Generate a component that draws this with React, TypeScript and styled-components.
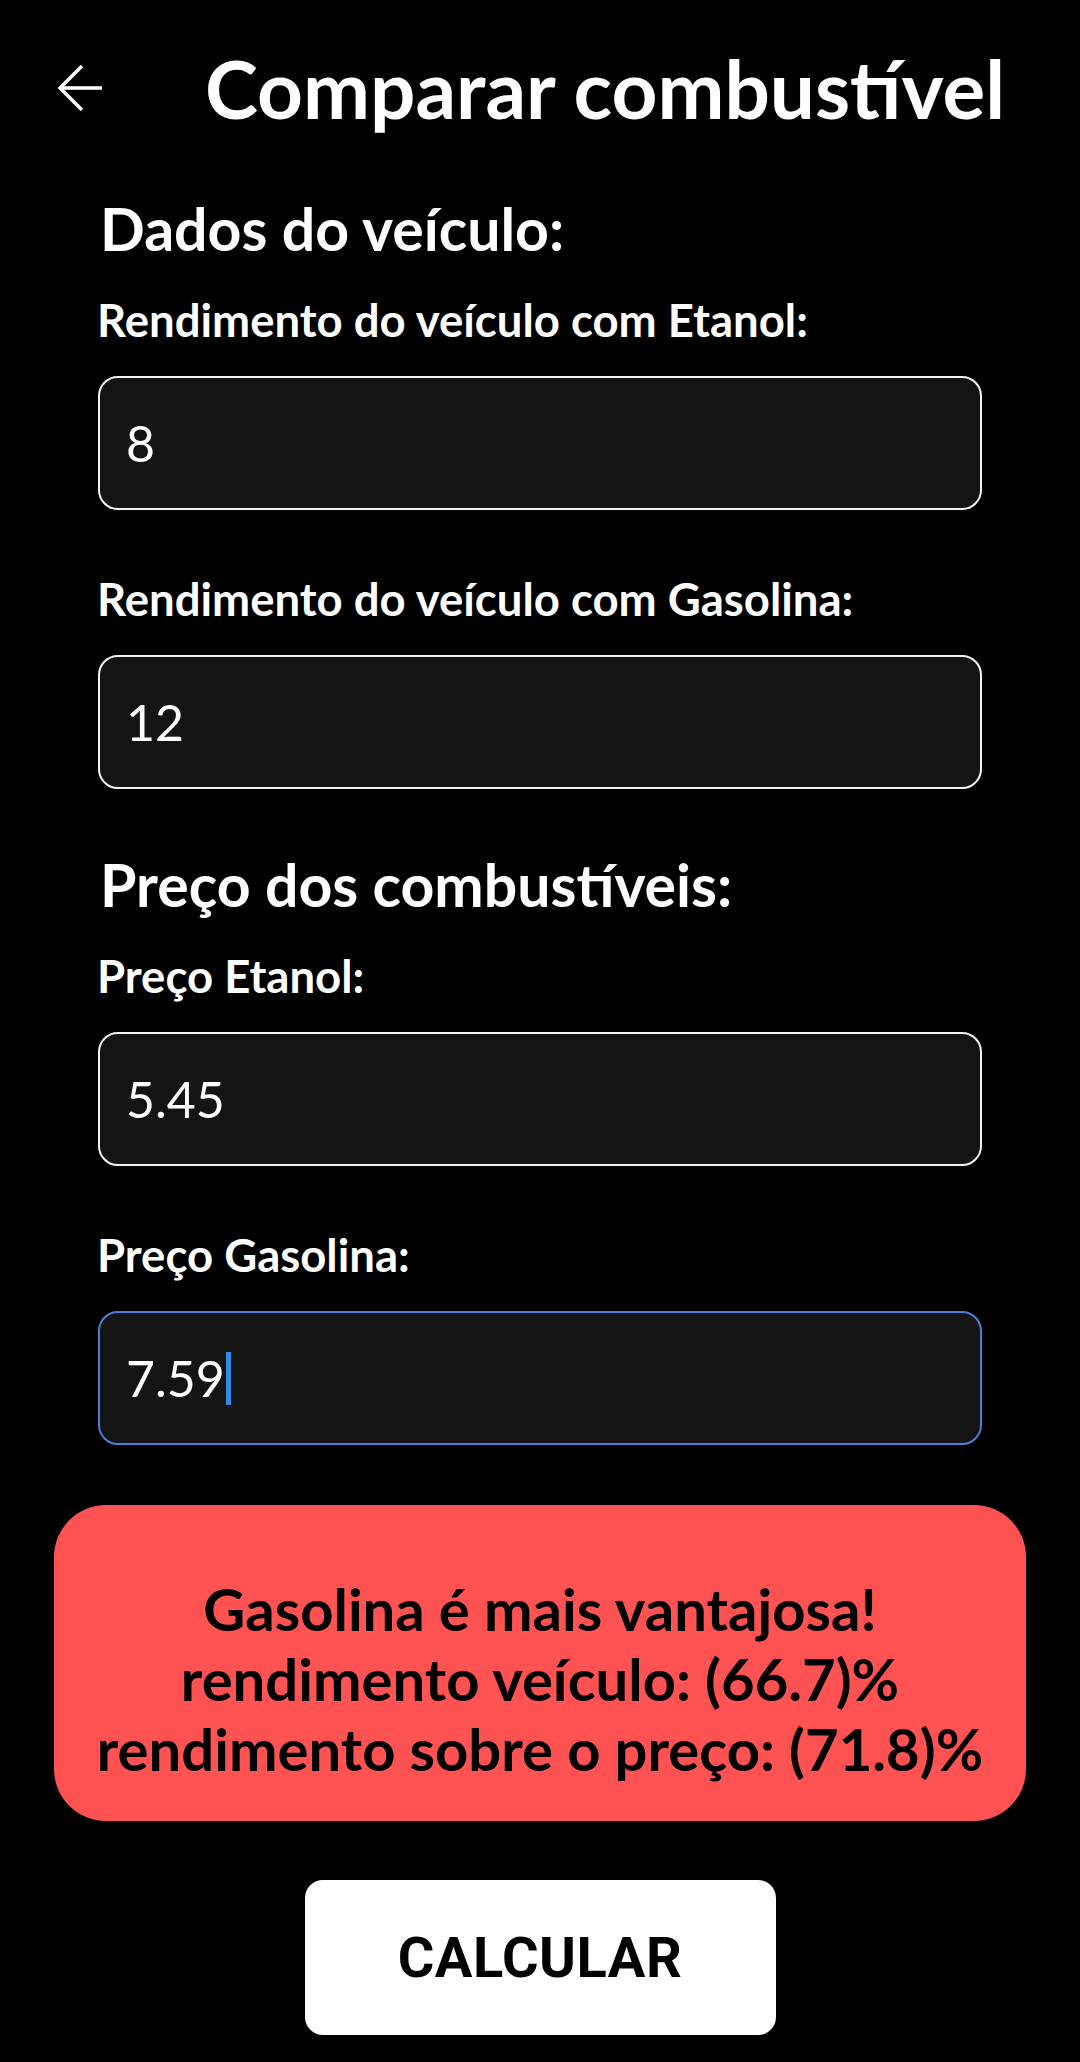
import React from "react";
import styled, { createGlobalStyle } from "styled-components";

const GlobalStyle = createGlobalStyle`
  html, body {
    margin: 0;
    padding: 0;
    background: #000;
  }
  body {
    font-family: "Lato", "Noto Sans", sans-serif;
    color: #fff;
  }
  * {
    box-sizing: border-box;
  }
`;

const Screen = styled.div`
  width: 1080px;
  min-height: 2062px;
  background: #000;
  display: flex;
  flex-direction: column;
`;

const Header = styled.header`
  height: 176px;
  display: flex;
  align-items: center;
  padding-left: 57px;
  gap: 102px;
`;

const BackBtn = styled.button`
  border: none;
  background: none;
  padding: 0;
  width: 46px;
  height: 46px;
  display: flex;
  align-items: center;
  justify-content: center;
  cursor: pointer;
`;

const Title = styled.h1`
  margin: 0;
  font-size: 80px;
  font-weight: 700;
  line-height: 1;
  color: #fff;
`;

const Form = styled.div`
  display: flex;
  flex-direction: column;
  padding: 23px 98px 0;
  gap: 66px;
`;

const Section = styled.section`
  display: flex;
  flex-direction: column;
  gap: 36px;
`;

const SectionTitle = styled.h2`
  margin: 0 0 0 2px;
  height: 60px;
  line-height: 60px;
  font-size: 59px;
  font-weight: 700;
`;

const Fields = styled.div`
  display: flex;
  flex-direction: column;
  gap: 64px;
`;

const Field = styled.div`
  display: flex;
  flex-direction: column;
  gap: 31px;
`;

const Label = styled.label`
  height: 50px;
  line-height: 50px;
  margin-left: -1px;
  font-size: 45.5px;
  font-weight: 700;
`;

const InputBox = styled.div<{ $focused?: boolean }>`
  height: 134px;
  display: flex;
  align-items: center;
  padding-left: 26px;
  background: #141414;
  border: 2.5px solid ${(p) => (p.$focused ? "#4a7fd8" : "#f2f2f2")};
  border-radius: 20px;
  font-size: 50px;
  font-weight: 400;
  color: #fff;
`;

const Caret = styled.span`
  display: inline-block;
  width: 5px;
  height: 53px;
  margin-left: 1px;
  background: #2f8be6;
`;

const Result = styled.div`
  margin: 60px 54px 0;
  height: 316px;
  padding: 69px 10px 0;
  background: #ff5252;
  border-radius: 52px;
  color: #000;
  text-align: center;
  font-size: 58px;
  font-weight: 700;
  line-height: 70px;
`;

const CalcBtn = styled.button`
  align-self: center;
  margin-top: 59px;
  width: 471px;
  height: 155px;
  border: none;
  border-radius: 18px;
  background: #fff;
  color: #000;
  font-family: Roboto, "Liberation Sans", sans-serif;
  font-size: 56px;
  font-weight: 700;
  letter-spacing: 0.5px;
  cursor: pointer;
`;

const fields1 = [
  { label: "Rendimento do veículo com Etanol:", value: "8" },
  { label: "Rendimento do veículo com Gasolina:", value: "12" },
];

const fields2 = [
  { label: "Preço Etanol:", value: "5.45" },
  { label: "Preço Gasolina:", value: "7.59", focused: true },
];

type FieldData = { label: string; value: string; focused?: boolean };

function FieldRow({ label, value, focused }: FieldData) {
  return (
    <Field>
      <Label>{label}</Label>
      <InputBox $focused={focused}>
        {value}
        {focused && <Caret />}
      </InputBox>
    </Field>
  );
}

export default function App() {
  return (
    <Screen>
      <GlobalStyle />
      <Header>
        <BackBtn aria-label="Voltar">
          <svg width="46" height="46" viewBox="0 0 46 46" fill="none">
            <path
              d="M45 23H3M25 1L3 23L25 45"
              stroke="#fff"
              strokeWidth="3.5"
              strokeLinecap="butt"
              strokeLinejoin="miter"
            />
          </svg>
        </BackBtn>
        <Title>Comparar combustível</Title>
      </Header>
      <Form>
        <Section>
          <SectionTitle>Dados do veículo:</SectionTitle>
          <Fields>
            {fields1.map((f) => (
              <FieldRow key={f.label} {...f} />
            ))}
          </Fields>
        </Section>
        <Section>
          <SectionTitle>Preço dos combustíveis:</SectionTitle>
          <Fields>
            {fields2.map((f) => (
              <FieldRow key={f.label} {...f} />
            ))}
          </Fields>
        </Section>
      </Form>
      <Result>
        Gasolina é mais vantajosa!
        <br />
        rendimento veículo: (66.7)%
        <br />
        rendimento sobre o preço: (71.8)%
      </Result>
      <CalcBtn>CALCULAR</CalcBtn>
    </Screen>
  );
}
